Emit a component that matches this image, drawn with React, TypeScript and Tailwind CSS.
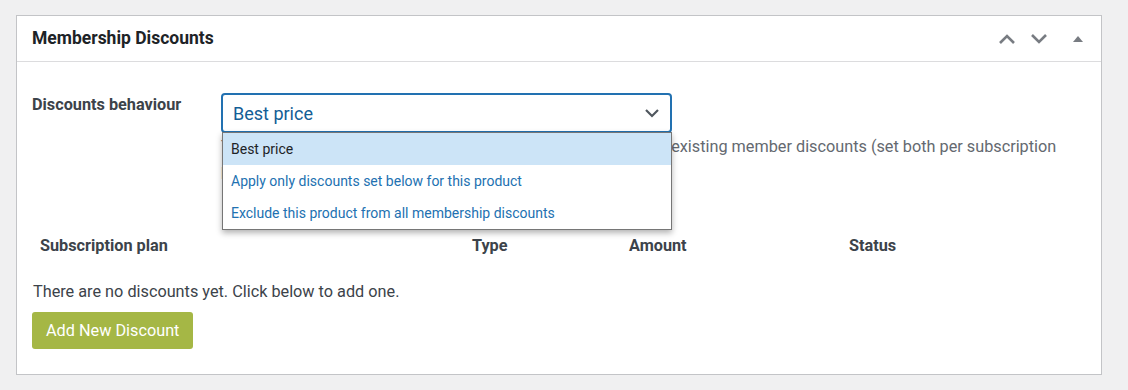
import { useState } from 'react'

const options = [
  'Best price',
  'Apply only discounts set below for this product',
  'Exclude this product from all membership discounts',
]

function ChevronUp() {
  return (
    <svg width="18" height="12" viewBox="0 0 18 12" fill="none">
      <path d="M2 10 L9 3 L16 10" stroke="#787c82" strokeWidth="2.6" />
    </svg>
  )
}

function ChevronDown() {
  return (
    <svg width="18" height="12" viewBox="0 0 18 12" fill="none">
      <path d="M2 2 L9 9 L16 2" stroke="#787c82" strokeWidth="2.6" />
    </svg>
  )
}

export default function App() {
  const [selected] = useState(0)

  return (
    <div className="min-h-[390px] bg-[#f0f0f1] pt-[15px] pl-[16px] font-['Roboto',sans-serif]">
      <div className="w-[1086px] border border-[#c3c4c7] bg-white">
        {/* Cabecera */}
        <div className="flex h-[46px] items-center justify-between border-b border-[#dcdcde] pl-[15px] pr-[18px]">
          <h2 className="text-[17.5px] font-bold text-[#1d2327]">Membership Discounts</h2>
          <div className="flex items-center">
            <span className="flex w-[32px] justify-center"><ChevronUp /></span>
            <span className="flex w-[32px] justify-center"><ChevronDown /></span>
            <span className="ml-[18px] h-0 w-0 border-x-[5px] border-b-[6px] border-x-transparent border-b-[#787c82]" />
          </div>
        </div>

        <div className="px-[15px] pt-[31px] pb-[25px]">
          {/* Comportamiento */}
          <div className="flex">
            <label className="w-[189px] pt-[1px] text-[16.25px] font-bold leading-[22px] text-[#3c434a]">
              Discounts behaviour
            </label>
            <div className="relative w-[451px]">
              <div className="flex h-[40px] items-center justify-between rounded-[4px] border-2 border-[#2271b1] pl-[10px] pr-[10px]">
                <span className="text-[18px] text-[#135e96]">Best price</span>
                <svg width="16" height="10" viewBox="0 0 16 10" fill="none">
                  <path d="M2 2 L8 8 L14 2" stroke="#50575e" strokeWidth="2.2" />
                </svg>
              </div>
              <p className="mt-[2px] w-[845px] text-[16.25px] leading-[24px] text-[#646970]">
                The "Best price" option will apply the greatest discount among existing member discounts (set both per subscription
                plan and per product).
              </p>
              {/* Lista desplegable */}
              <ul className="absolute left-[1px] top-[39px] w-[450px] border border-[#767676] bg-white shadow-[0_3px_6px_rgba(0,0,0,0.3)]">
                {options.map((o, i) => (
                  <li
                    key={o}
                    className={
                      i === selected
                        ? 'flex h-[32px] items-center bg-[#cce4f7] px-[8px] text-[14px] text-[#1d2327]'
                        : 'flex h-[32px] items-center px-[8px] text-[14px] text-[#2271b1]'
                    }
                  >
                    {o}
                  </li>
                ))}
              </ul>
            </div>
          </div>

          {/* Tabla */}
          <div className="mt-[41px] grid grid-cols-[432px_157px_220px_1fr] text-[16.25px] font-bold text-[#3c434a]">
            <div className="px-[8px] py-[10px]">Subscription plan</div>
            <div className="px-[8px] py-[10px]">Type</div>
            <div className="px-[8px] py-[10px]">Amount</div>
            <div className="px-[8px] py-[10px]">Status</div>
          </div>

          <p className="mt-[13px] pl-[1px] text-[16.25px] leading-[22px] text-[#3c434a]">
            There are no discounts yet. Click below to add one.
          </p>
          <button className="mt-[9px] h-[37px] rounded-[3px] bg-[#a5b745] px-[14px] text-[16.25px] text-white">
            Add New Discount
          </button>
        </div>
      </div>
    </div>
  )
}
